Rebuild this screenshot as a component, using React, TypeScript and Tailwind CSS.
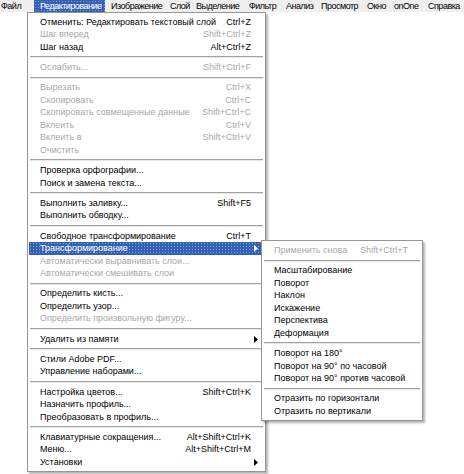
import clsx from "clsx";

type Item =
  | "sep"
  | { t: string; k?: string; d?: boolean; sub?: boolean; active?: boolean };

const bar = [
  { t: "Файл", w: "w-[33px]" },
  { t: "Редактирование", w: "w-[71px]", active: true },
  { t: "Изображение", w: "w-[59px]" },
  { t: "Слой", w: "w-[26px]" },
  { t: "Выделение", w: "w-[53px]" },
  { t: "Фильтр", w: "w-[37px]" },
  { t: "Анализ", w: "w-[35px]" },
  { t: "Просмотр", w: "w-[46px]" },
  { t: "Окно", w: "w-[27px]" },
  { t: "onOne", w: "w-[34px]" },
  { t: "Справка", w: "w-[45px]" },
];

const editMenu: Item[] = [
  { t: "Отменить: Редактировать текстовый слой", k: "Ctrl+Z" },
  { t: "Шаг вперед", k: "Shift+Ctrl+Z", d: true },
  { t: "Шаг назад", k: "Alt+Ctrl+Z" },
  "sep",
  { t: "Ослабить...", k: "Shift+Ctrl+F", d: true },
  "sep",
  { t: "Вырезать", k: "Ctrl+X", d: true },
  { t: "Скопировать", k: "Ctrl+C", d: true },
  { t: "Скопировать совмещенные данные", k: "Shift+Ctrl+C", d: true },
  { t: "Вклеить", k: "Ctrl+V", d: true },
  { t: "Вклеить в", k: "Shift+Ctrl+V", d: true },
  { t: "Очистить", d: true },
  "sep",
  { t: "Проверка орфографии..." },
  { t: "Поиск и замена текста..." },
  "sep",
  { t: "Выполнить заливку...", k: "Shift+F5" },
  { t: "Выполнить обводку..." },
  "sep",
  { t: "Свободное трансформирование", k: "Ctrl+T" },
  { t: "Трансформирование", sub: true, active: true },
  { t: "Автоматически выравнивать слои...", d: true },
  { t: "Автоматически смешивать слои", d: true },
  "sep",
  { t: "Определить кисть..." },
  { t: "Определить узор..." },
  { t: "Определить произвольную фигуру...", d: true },
  "sep",
  { t: "Удалить из памяти", sub: true },
  "sep",
  { t: "Стили Adobe PDF..." },
  { t: "Управление наборами..." },
  "sep",
  { t: "Настройка цветов...", k: "Shift+Ctrl+K" },
  { t: "Назначить профиль..." },
  { t: "Преобразовать в профиль..." },
  "sep",
  { t: "Клавиатурные сокращения...", k: "Alt+Shift+Ctrl+K" },
  { t: "Меню...", k: "Alt+Shift+Ctrl+M" },
  { t: "Установки", sub: true },
];

const transformMenu: Item[] = [
  { t: "Применить снова", k: "Shift+Ctrl+T", d: true },
  "sep",
  { t: "Масштабирование" },
  { t: "Поворот" },
  { t: "Наклон" },
  { t: "Искажение" },
  { t: "Перспектива" },
  { t: "Деформация" },
  "sep",
  { t: "Поворот на 180°" },
  { t: "Поворот на 90° по часовой" },
  { t: "Поворот на 90° против часовой" },
  "sep",
  { t: "Отразить по горизонтали" },
  { t: "Отразить по вертикали" },
];

const selected =
  "bg-[#3462b2] bg-[radial-gradient(circle,rgba(255,255,255,0.4)_0.6px,transparent_0.9px)] bg-[length:3px_3px] text-white";

function Arrow() {
  return (
    <svg width="4" height="7" viewBox="0 0 4 7">
      <path d="M0 0L4 3.5L0 7Z" fill="currentColor" />
    </svg>
  );
}

function Separator() {
  return (
    <div className="flex h-[7.75px] flex-col justify-center px-[1px]">
      <div className="h-px bg-[#a3a3a3]" />
      <div className="h-px bg-[#e6e6e6]" />
    </div>
  );
}

function Row({ item, children }: { item: Exclude<Item, "sep">; children?: React.ReactNode }) {
  return (
    <div
      className={clsx(
        "relative flex h-[12.5px] items-center whitespace-nowrap pl-[11px] pr-[6px]",
        item.active ? selected : item.d ? "text-[#a8a8a8]" : "text-black"
      )}
    >
      <span className="flex-1">{item.t}</span>
      {item.k && <span className="mr-[7px]">{item.k}</span>}
      {item.sub && (
        <span className={item.active ? "text-white" : "text-black"}>
          <Arrow />
        </span>
      )}
      {children}
    </div>
  );
}

function Menu({ items, className, submenu }: { items: Item[]; className: string; submenu?: React.ReactNode }) {
  return (
    <div
      className={clsx(
        "border border-[#959595] bg-white px-[1px] pb-[2px] pt-[3px] shadow-[2px_2px_2px_rgba(0,0,0,0.3)]",
        className
      )}
    >
      {items.map((item, i) =>
        item === "sep" ? (
          <Separator key={i} />
        ) : (
          <Row key={i} item={item}>
            {item.active && submenu}
          </Row>
        )
      )}
    </div>
  );
}

export default function App() {
  return (
    <div className="h-[474px] w-[464px] overflow-hidden bg-white font-['Liberation_Sans',Arial,sans-serif] text-[9px] leading-none tracking-[0px]">
      <div className="flex h-[12px] bg-[#efefef] pl-[1px] tracking-[-0.5px]">
        {bar.map((b, i) => (
          <div
            key={b.t}
            className={clsx(
              "flex shrink-0 items-center whitespace-nowrap",
              b.w,
              i === 0 ? "pl-0" : "pl-[6px]",
              b.active ? selected : "text-black"
            )}
          >
            {b.t}
          </div>
        ))}
      </div>
      <Menu
        items={editMenu}
        className="ml-[27px] w-[239px]"
        submenu={
          <Menu
            items={transformMenu}
            className="absolute left-[232px] top-[-2px] z-10 w-[162px]"
          />
        }
      />
    </div>
  );
}
